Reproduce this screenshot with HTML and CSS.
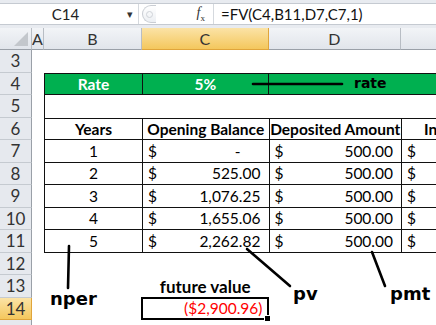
FILE: index.html
```html
<!DOCTYPE html>
<html lang="en">
<head>
  <meta charset="UTF-8">
  <title>FV Function</title>
  <link rel="stylesheet" href="styles.css">
</head>
<body>
  <div class="window">
    <div class="formula-bar">
      <div class="name-box">
        <span class="name">C14</span>
        <span class="drop">&#9662;</span>
      </div>
      <div class="bar-tools">
        <span class="knob"><span class="dot"></span></span>
        <span class="fx"><i>f</i><sub>x</sub></span>
      </div>
      <div class="formula">=FV(C4,B11,D7,C7,1)</div>
    </div>

    <div class="sheet">
      <!-- column headers -->
      <div class="hd corner"><span class="tri"></span></div>
      <div class="hd col">A</div>
      <div class="hd col">B</div>
      <div class="hd col active">C</div>
      <div class="hd col">D</div>
      <div class="hd col last"></div>

      <!-- row 3 -->
      <div class="hd row">3</div>
      <div class="c span5"></div>

      <!-- row 4 -->
      <div class="hd row">4</div>
      <div class="c"></div>
      <div class="c green b-tb b-l center">Rate</div>
      <div class="c green b-tb b-l b-r center">5%</div>
      <div class="c green b-tb wide"></div>

      <!-- row 5 -->
      <div class="hd row">5</div>
      <div class="c"></div>
      <div class="c b-l wide4"></div>

      <!-- row 6 -->
      <div class="hd row">6</div>
      <div class="c"></div>
      <div class="c box top bold center">Years</div>
      <div class="c box top bold center">Opening Balance</div>
      <div class="c box top bold center">Deposited Amount</div>
      <div class="c box top bold clip">Interest</div>

      <div class="hd row">7</div>
      <div class="c"></div>
      <div class="c box center">1</div>
      <div class="c box acc"><span>$</span><span class="dash">-</span></div>
      <div class="c box acc"><span>$</span><span>500.00</span></div>
      <div class="c box acc"><span>$</span></div>

      <div class="hd row">8</div>
      <div class="c"></div>
      <div class="c box center">2</div>
      <div class="c box acc"><span>$</span><span>525.00</span></div>
      <div class="c box acc"><span>$</span><span>500.00</span></div>
      <div class="c box acc"><span>$</span></div>

      <div class="hd row">9</div>
      <div class="c"></div>
      <div class="c box center">3</div>
      <div class="c box acc"><span>$</span><span>1,076.25</span></div>
      <div class="c box acc"><span>$</span><span>500.00</span></div>
      <div class="c box acc"><span>$</span></div>

      <div class="hd row">10</div>
      <div class="c"></div>
      <div class="c box center">4</div>
      <div class="c box acc"><span>$</span><span>1,655.06</span></div>
      <div class="c box acc"><span>$</span><span>500.00</span></div>
      <div class="c box acc"><span>$</span></div>

      <div class="hd row">11</div>
      <div class="c"></div>
      <div class="c box center">5</div>
      <div class="c box acc"><span>$</span><span>2,262.82</span></div>
      <div class="c box acc"><span>$</span><span>500.00</span></div>
      <div class="c box acc"><span>$</span></div>

      <div class="hd row">12</div>
      <div class="c span5"></div>

      <div class="hd row">13</div>
      <div class="c"></div>
      <div class="c"></div>
      <div class="c bold center bottom label">future value</div>
      <div class="c wide"></div>

      <div class="hd row active">14</div>
      <div class="c"></div>
      <div class="c"></div>
      <div class="c selected"><span class="neg">($2,900.96)</span><span class="handle"></span></div>
      <div class="c wide"></div>

      <div class="hd row"></div>
      <div class="c span5"></div>

      <!-- annotations drawn on top -->
      <svg class="arrows" width="436" height="325" viewBox="0 0 436 325">
        <g stroke="#000" stroke-width="2.6" stroke-linecap="round" fill="none">
          <line x1="253" y1="83" x2="342" y2="83"/>
          <line x1="69" y1="245" x2="68" y2="287"/>
          <line x1="247" y1="248" x2="290" y2="285"/>
          <line x1="372" y1="251" x2="385" y2="285"/>
        </g>
      </svg>
      <span class="note rate">rate</span>
      <span class="note nper">nper</span>
      <span class="note pv">pv</span>
      <span class="note pmt">pmt</span>
    </div>
  </div>
</body>
</html>
```

FILE: styles.css
```css
body {
  margin: 0;
  padding: 0;
  background-color: #fff;
  font-family: Lato, "Open Sans", sans-serif;
  overflow: hidden;
}

.window {
  position: relative;
  width: 436px;
  height: 325px;
  overflow: hidden;
}

/* formula bar */

.formula-bar {
  display: flex;
  height: 20px;
  border-top: 1px solid #c5cad1;
  border-bottom: 1px solid #c5cad1;
  margin-top: 3px;
  margin-bottom: 3px;
  background-color: #fff;
  box-shadow: 0 -3px 0 #e8ebf0, 0 3px 0 #e8ebf0;
}

.name-box {
  width: 138px;
  display: flex;
  align-items: center;
  border-right: 1px solid #d5d9de;
  font-size: 15px;
  color: #222;
}

.name-box .name {
  flex: 1;
  text-align: center;
  padding-left: 4px;
}

.name-box .drop {
  font-size: 11px;
  color: #333;
  margin-right: 5px;
}

.bar-tools {
  width: 74px;
  display: flex;
  align-items: center;
  border-right: 1px solid #d5d9de;
}

.knob {
  display: flex;
  align-items: center;
  justify-content: center;
  width: 13px;
  height: 16px;
  margin-left: 3px;
  border: 1px solid #c9cdd3;
  border-right: none;
  border-radius: 10px 0 0 10px;
  background: linear-gradient(#fff, #eceff3);
}

.knob .dot {
  width: 5px;
  height: 5px;
  border: 1px solid #cfd3d8;
  border-radius: 50%;
}

.fx {
  margin-left: auto;
  margin-right: 8px;
  font-family: "Liberation Serif", serif;
  font-size: 14px;
  color: #333;
}

.fx sub {
  font-size: 9px;
}

.formula {
  padding-left: 7px;
  font-size: 15px;
  line-height: 20px;
  color: #111;
}

/* grid */

.sheet {
  position: relative;
  display: grid;
  grid-template-columns: 32px 12px 98px 126.5px 132.5px 35px;
  grid-template-rows: 22px repeat(12, 22.5px) 6px;
  font-size: 15.5px;
  color: #000;
}

.hd {
  background: linear-gradient(#f2f4f7, #e1e5eb);
  border-right: 1px solid #b8bdc4;
  border-bottom: 1px solid #b8bdc4;
  display: flex;
  align-items: center;
  justify-content: center;
  color: #333;
  font-size: 16px;
}

.hd.row {
  background: #e6e9ee;
  border-bottom-color: #c5cad0;
  border-right-color: #9aa0a8;
  font-size: 17px;
}

.hd.col {
  border-bottom-color: #9aa0a8;
}

.hd.active {
  background: linear-gradient(#fbe3a6, #f4c75d);
  border-bottom-color: #e0a53b;
  border-right-color: #e0a53b;
}

.hd.last {
  border-right: none;
}

.corner {
  position: relative;
  border-bottom-color: #9aa0a8;
}

.tri {
  position: absolute;
  right: 3px;
  bottom: 3px;
  width: 0;
  height: 0;
  border-left: 14px solid transparent;
  border-bottom: 14px solid #c3c7cc;
}

.c {
  display: flex;
  align-items: center;
  padding: 0 6px;
  white-space: nowrap;
  overflow: hidden;
}

.span5 {
  grid-column: 2 / 7;
}

.wide {
  grid-column: span 2;
}

.wide4 {
  grid-column: span 4;
}

.center {
  justify-content: center;
}

.bold {
  font-weight: bold;
}

.bottom {
  align-items: flex-end;
  padding-bottom: 2px;
}

.label {
  font-size: 17px;
  padding-bottom: 1px;
}

.green {
  background-color: #00b050;
  color: #fff;
  font-weight: bold;
}

.b-tb {
  border-top: 1px solid #111;
  border-bottom: 1px solid #111;
}

.b-l {
  border-left: 1px solid #111;
}

.b-r {
  border-right: 1px solid #111;
}

.box {
  border-left: 1px solid #111;
  border-bottom: 1px solid #111;
}

.box.top {
  border-top: 1px solid #111;
}

.clip {
  justify-content: flex-start;
  padding-left: 22px;
}

.acc {
  justify-content: space-between;
  padding: 0 8px 0 5px;
}

.acc .dash {
  padding-right: 20px;
}

.selected {
  position: relative;
  justify-content: flex-end;
  border: 2px solid #000;
  padding-right: 4px;
  margin: -1px 0 0 -1px;
  overflow: visible;
}

.neg {
  color: #ff0000;
}

.handle {
  position: absolute;
  right: -4px;
  bottom: -4px;
  width: 5px;
  height: 5px;
  background: #000;
  border: 1px solid #fff;
}

/* annotations */

.arrows {
  position: absolute;
  left: 0;
  top: -27px;
  pointer-events: none;
}

.note {
  position: absolute;
  font-family: "DejaVu Sans", Verdana, sans-serif;
  font-weight: bold;
  font-size: 18px;
  color: #000;
  line-height: 1;
}

.note.rate {
  left: 354px;
  top: 48px;
  font-size: 14px;
}

.note.nper {
  left: 50px;
  top: 262px;
}

.note.pv {
  left: 293px;
  top: 257px;
}

.note.pmt {
  left: 390px;
  top: 257px;
}
```
